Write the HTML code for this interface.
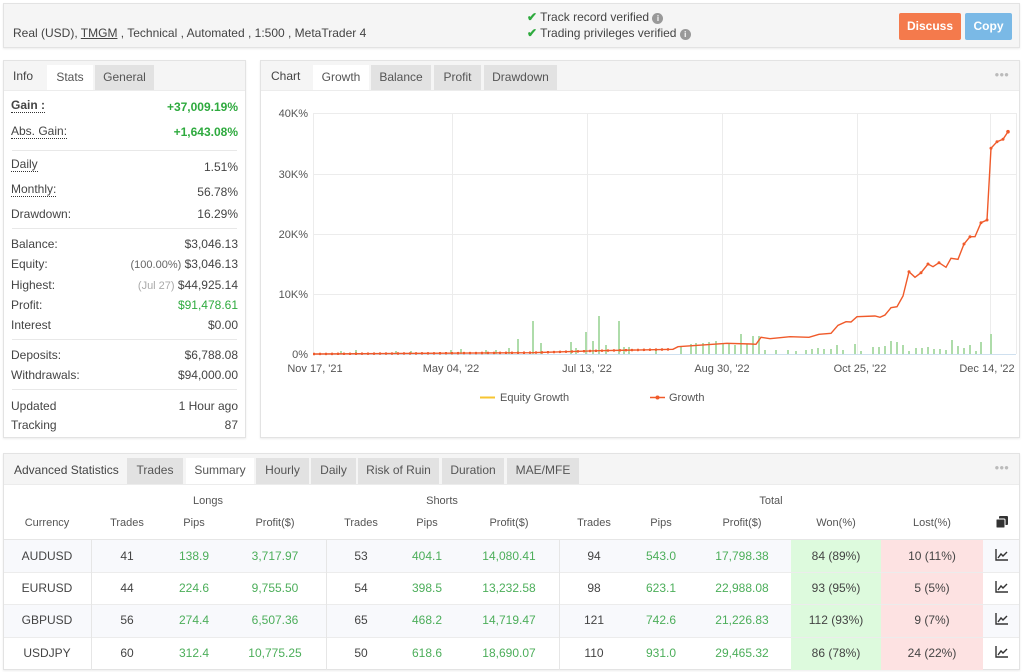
<!DOCTYPE html>
<html><head><meta charset="utf-8">
<style>
*{box-sizing:border-box;margin:0;padding:0}
body{width:1024px;height:672px;background:#fff;font-family:"Liberation Sans",sans-serif;font-size:12px;color:#444;position:relative;overflow:hidden}
.a{position:absolute;white-space:nowrap}
.box{position:absolute;border:1px solid #e3e3e3;background:#fff;box-shadow:0 1px 2px rgba(0,0,0,.08)}
.tabbar{position:absolute;left:0;right:0;top:0;background:#f5f5f5;border-bottom:1px solid #ececec}
.tab{position:absolute;top:4px;bottom:0;background:#e2e2e2;text-align:center;line-height:24px;color:#555}
.tab.on{background:#fff}
.g{color:#2eaa3e}
.lg{color:#4cae5a}
.u{border-bottom:1px dotted #333}
.sep{position:absolute;left:8px;right:8px;height:1px;background:#e8e8e8}
.dots{position:absolute;color:#bbb;font-size:8px;letter-spacing:0}
.c{position:absolute;transform:translateX(-50%);white-space:nowrap}
</style></head><body>

<div class="box" style="left:3px;top:3px;width:1017px;height:45px;background:#f5f5f5">
 <div class="a" style="left:9px;top:22px">Real (USD), <span style="text-decoration:underline">TMGM</span> , Technical , Automated , 1:500 , MetaTrader 4</div>
 <div class="a" style="left:523px;top:6px"><span style="color:#2eaa3e;font-weight:bold">&#10004;</span> Track record verified <span style="display:inline-block;width:11px;height:11px;border-radius:50%;background:#999;color:#fff;font-size:8px;text-align:center;line-height:11px;font-weight:bold">i</span></div>
 <div class="a" style="left:523px;top:22px"><span style="color:#2eaa3e;font-weight:bold">&#10004;</span> Trading privileges verified <span style="display:inline-block;width:11px;height:11px;border-radius:50%;background:#999;color:#fff;font-size:8px;text-align:center;line-height:11px;font-weight:bold">i</span></div>
 <div class="a" style="left:895px;top:9px;width:62px;height:27px;background:#f47a4c;color:#fff;text-align:center;line-height:27px;font-weight:bold;border-radius:2px">Discuss</div>
 <div class="a" style="left:961px;top:9px;width:47px;height:27px;background:#7ab9e6;color:#fff;text-align:center;line-height:27px;font-weight:bold;border-radius:2px">Copy</div>
</div>

<div class="box" style="left:3px;top:60px;width:243px;height:378px">
 <div class="tabbar" style="height:30px">
  <div class="a" style="left:9px;top:8px;color:#444">Info</div>
  <div class="tab on" style="left:43px;width:46px">Stats</div>
  <div class="tab" style="left:91px;width:59px">General</div>
 </div>
 <div class="a" style="left:7px;top:37px;font-weight:bold"><span class="u">Gain :</span></div>
 <div class="a g" style="right:7px;top:39px;font-weight:bold">+37,009.19%</div>
 <div class="a" style="left:7px;top:63px"><span class="u">Abs. Gain:</span></div>
 <div class="a g" style="right:7px;top:64px;font-weight:bold">+1,643.08%</div>
 <div class="sep" style="top:89px"></div>
 <div class="a" style="left:7px;top:96px"><span class="u">Daily</span></div><div class="a" style="right:7px;top:99px">1.51%</div>
 <div class="a" style="left:7px;top:121px"><span class="u">Monthly:</span></div><div class="a" style="right:7px;top:124px">56.78%</div>
 <div class="a" style="left:7px;top:146px">Drawdown:</div><div class="a" style="right:7px;top:146px">16.29%</div>
 <div class="sep" style="top:167px"></div>
 <div class="a" style="left:7px;top:176px">Balance:</div><div class="a" style="right:7px;top:176px">$3,046.13</div>
 <div class="a" style="left:7px;top:196px">Equity:</div><div class="a" style="right:7px;top:196px"><span style="font-size:11px;color:#666">(100.00%)</span> $3,046.13</div>
 <div class="a" style="left:7px;top:217px">Highest:</div><div class="a" style="right:7px;top:217px"><span style="font-size:11px;color:#aaa">(Jul 27)</span> $44,925.14</div>
 <div class="a" style="left:7px;top:237px">Profit:</div><div class="a g" style="right:7px;top:237px">$91,478.61</div>
 <div class="a" style="left:7px;top:257px">Interest</div><div class="a" style="right:7px;top:257px">$0.00</div>
 <div class="sep" style="top:278px"></div>
 <div class="a" style="left:7px;top:287px">Deposits:</div><div class="a" style="right:7px;top:287px">$6,788.08</div>
 <div class="a" style="left:7px;top:307px">Withdrawals:</div><div class="a" style="right:7px;top:307px">$94,000.00</div>
 <div class="sep" style="top:328px"></div>
 <div class="a" style="left:7px;top:338px">Updated</div><div class="a" style="right:7px;top:338px">1 Hour ago</div>
 <div class="a" style="left:7px;top:357px">Tracking</div><div class="a" style="right:7px;top:357px">87</div>
</div>

<div class="box" style="left:260px;top:60px;width:760px;height:378px">
 <div class="tabbar" style="height:30px">
  <div class="a" style="left:10px;top:8px">Chart</div>
  <div class="tab on" style="left:52px;width:56px">Growth</div>
  <div class="tab" style="left:110px;width:60px">Balance</div>
  <div class="tab" style="left:173px;width:47px">Profit</div>
  <div class="tab" style="left:223px;width:73px">Drawdown</div>
  <div class="dots" style="right:10px;top:9px">&#9679;&#9679;&#9679;</div>
 </div>
</div>
<svg class="a" style="left:0;top:0" width="1024" height="440" viewBox="0 0 1024 440">
 <g stroke="#ececec" stroke-width="1">
  <line x1="313" y1="113.5" x2="1016" y2="113.5"/><line x1="313" y1="174.5" x2="1016" y2="174.5"/>
  <line x1="313" y1="234.5" x2="1016" y2="234.5"/><line x1="313" y1="294.5" x2="1016" y2="294.5"/>
  <line x1="313.5" y1="113" x2="313.5" y2="354"/><line x1="452.5" y1="113" x2="452.5" y2="354"/>
  <line x1="587.5" y1="113" x2="587.5" y2="354"/><line x1="722.5" y1="113" x2="722.5" y2="354"/>
  <line x1="857.5" y1="113" x2="857.5" y2="354"/><line x1="990.5" y1="113" x2="990.5" y2="354"/>
  <line x1="1016.5" y1="113" x2="1016.5" y2="354"/>
 </g>
 <line x1="313" y1="354.5" x2="1016" y2="354.5" stroke="#cfe0ef"/>
 <g fill="#aedcaa">
  <rect x="532" y="321" width="2" height="33"/><rect x="540" y="343" width="2" height="11"/>
  <rect x="517" y="339" width="2" height="15"/><rect x="508" y="348" width="2" height="6"/>
  <rect x="495" y="350" width="2" height="4"/><rect x="485" y="350" width="2" height="4"/>
  <rect x="460" y="349" width="2" height="5"/><rect x="450" y="350" width="2" height="4"/>
  <rect x="410" y="351" width="2" height="3"/><rect x="395" y="351" width="2" height="3"/>
  <rect x="570" y="342" width="2" height="12"/><rect x="575" y="348" width="2" height="6"/>
  <rect x="585" y="332" width="2" height="22"/><rect x="592" y="341" width="2" height="13"/>
  <rect x="598" y="316" width="2" height="38"/><rect x="605" y="345" width="2" height="9"/>
  <rect x="618" y="321" width="2" height="33"/><rect x="623" y="347" width="2" height="7"/>
  <rect x="628" y="347" width="2" height="7"/><rect x="655" y="349" width="2" height="5"/>
  <rect x="680" y="346" width="2" height="8"/><rect x="690" y="344" width="2" height="10"/>
  <rect x="695" y="343" width="2" height="11"/><rect x="702" y="343" width="2" height="11"/>
  <rect x="708" y="342" width="2" height="12"/><rect x="715" y="341" width="2" height="13"/>
  <rect x="722" y="344" width="2" height="10"/><rect x="728" y="343" width="2" height="11"/>
  <rect x="734" y="345" width="2" height="9"/><rect x="740" y="334" width="2" height="20"/>
  <rect x="746" y="344" width="2" height="10"/><rect x="752" y="336" width="2" height="18"/>
  <rect x="758" y="336" width="2" height="18"/><rect x="764" y="350" width="2" height="4"/>
  <rect x="775" y="350" width="2" height="4"/><rect x="787" y="350" width="2" height="4"/>
  <rect x="795" y="351" width="2" height="3"/><rect x="805" y="350" width="2" height="4"/>
  <rect x="811" y="349" width="2" height="5"/><rect x="817" y="348" width="2" height="6"/>
  <rect x="823" y="349" width="2" height="5"/><rect x="830" y="349" width="2" height="5"/>
  <rect x="836" y="345" width="2" height="9"/><rect x="842" y="350" width="2" height="4"/>
  <rect x="854" y="344" width="2" height="10"/><rect x="860" y="351" width="2" height="3"/>
  <rect x="872" y="347" width="2" height="7"/><rect x="878" y="347" width="2" height="7"/>
  <rect x="884" y="346" width="2" height="8"/><rect x="890" y="341" width="2" height="13"/>
  <rect x="896" y="342" width="2" height="12"/><rect x="902" y="345" width="2" height="9"/>
  <rect x="908" y="351" width="2" height="3"/><rect x="915" y="348" width="2" height="6"/>
  <rect x="921" y="348" width="2" height="6"/><rect x="927" y="347" width="2" height="7"/>
  <rect x="933" y="349" width="2" height="5"/><rect x="939" y="349" width="2" height="5"/>
  <rect x="945" y="350" width="2" height="4"/><rect x="951" y="340" width="2" height="14"/>
  <rect x="957" y="346" width="2" height="8"/><rect x="963" y="348" width="2" height="6"/>
  <rect x="969" y="345" width="2" height="9"/><rect x="975" y="351" width="2" height="3"/>
  <rect x="980" y="342" width="2" height="12"/><rect x="990" y="334" width="2" height="20"/>
  <rect x="355" y="350" width="2" height="4"/><rect x="340" y="351" width="2" height="3"/>
 </g>
 <polyline fill="none" stroke="#f05a2a" stroke-width="1.4" points="313,354 532,352.7 600,350.7 673,349.3 678,346.7 727,343.3 751,344 756,344.3 761,337.3 770,338.7 790,336.7 809,337.3 819,334.3 831,333.3 838,325.3 846,321.7 851,322 857,316.7 875,316 880,317.3 885,315 891,307.7 897,306.7 903,296 909,271.7 915,277.3 921,272.7 928,264 933,266.7 939,262.7 946,267.3 951,258.3 958,259.3 964,244 970,236.7 975,236.7 981,222.7 987,220 991,148.3 997,141.7 1003,139.3 1008,131.7"/>
 <g fill="#f05a2a">
  <circle cx="1008" cy="131.7" r="1.8"/><circle cx="991" cy="148.3" r="1.5"/><circle cx="997" cy="141.7" r="1.5"/><circle cx="1003" cy="139.3" r="1.5"/>
  <circle cx="981" cy="222.7" r="1.5"/><circle cx="987" cy="220" r="1.5"/><circle cx="964" cy="244" r="1.5"/><circle cx="970" cy="236.7" r="1.5"/>
  <circle cx="909" cy="271.7" r="1.5"/><circle cx="921" cy="272.7" r="1.5"/><circle cx="928" cy="264" r="1.5"/><circle cx="939" cy="262.7" r="1.5"/>
 </g>
 <polyline fill="none" stroke="#f05a2a" stroke-width="2.4" stroke-dasharray="2 4" points="313,354 532,352.7 600,350.7 673,349.3"/>
 <g font-family="Liberation Sans" font-size="11" fill="#555">
  <text x="308" y="117" text-anchor="end">40K%</text><text x="308" y="178" text-anchor="end">30K%</text>
  <text x="308" y="238" text-anchor="end">20K%</text><text x="308" y="298" text-anchor="end">10K%</text>
  <text x="308" y="358" text-anchor="end">0%</text>
  <text x="315" y="372" text-anchor="middle">Nov 17, '21</text><text x="451" y="372" text-anchor="middle">May 04, '22</text>
  <text x="587" y="372" text-anchor="middle">Jul 13, '22</text><text x="722" y="372" text-anchor="middle">Aug 30, '22</text>
  <text x="860" y="372" text-anchor="middle">Oct 25, '22</text><text x="987" y="372" text-anchor="middle">Dec 14, '22</text>
  <text x="500" y="401">Equity Growth</text><text x="669" y="401">Growth</text>
 </g>
 <line x1="480" y1="397.5" x2="495" y2="397.5" stroke="#f7c531" stroke-width="2"/>
 <line x1="650" y1="397.5" x2="665" y2="397.5" stroke="#f05a2a" stroke-width="1.5"/><circle cx="657.5" cy="397.5" r="2" fill="#f05a2a"/>
</svg>

<div class="box" style="left:3px;top:453px;width:1017px;height:217px">
 <div class="tabbar" style="height:31px">
  <div class="a" style="left:10px;top:9px">Advanced Statistics</div>
  <div class="tab" style="left:123px;width:56px;line-height:25px">Trades</div>
  <div class="tab on" style="left:182px;width:68px;line-height:25px">Summary</div>
  <div class="tab" style="left:252px;width:53px;line-height:25px">Hourly</div>
  <div class="tab" style="left:307px;width:45px;line-height:25px">Daily</div>
  <div class="tab" style="left:354px;width:81px;line-height:25px">Risk of Ruin</div>
  <div class="tab" style="left:438px;width:62px;line-height:25px">Duration</div>
  <div class="tab" style="left:503px;width:72px;line-height:25px">MAE/MFE</div>
  <div class="dots" style="right:10px;top:9px">&#9679;&#9679;&#9679;</div>
 </div>
</div>
<div class="a" style="left:4px;top:540px;width:1015px;height:32px;background:#f8f9fc"></div>
<div class="a" style="left:4px;top:604px;width:1015px;height:33px;background:#f8f9fc"></div>
<div class="a" style="left:791px;top:540px;width:90px;height:130px;background:#ddfadd"></div>
<div class="a" style="left:881px;top:540px;width:102px;height:130px;background:#fde2e2"></div>
<div class="a" style="left:4px;top:539px;width:1015px;height:1px;background:#e6e6e6"></div>
<div class="a" style="left:4px;top:572px;width:1015px;height:1px;background:#ececec"></div>
<div class="a" style="left:4px;top:604px;width:1015px;height:1px;background:#ececec"></div>
<div class="a" style="left:4px;top:637px;width:1015px;height:1px;background:#ececec"></div>
<div class="a" style="left:91px;top:540px;width:1px;height:130px;background:#e6e6e6"></div>
<div class="a" style="left:326px;top:540px;width:1px;height:130px;background:#e6e6e6"></div>
<div class="a" style="left:559px;top:540px;width:1px;height:130px;background:#e6e6e6"></div>

<div style="font-size:11px;color:#555">
<div class="c" style="left:208px;top:495px">Longs</div>
<div class="c" style="left:442px;top:495px">Shorts</div>
<div class="c" style="left:771px;top:495px">Total</div>
<div class="c" style="left:47px;top:517px">Currency</div>
<div class="c" style="left:127px;top:517px">Trades</div>
<div class="c" style="left:194px;top:517px">Pips</div>
<div class="c" style="left:275px;top:517px">Profit($)</div>
<div class="c" style="left:361px;top:517px">Trades</div>
<div class="c" style="left:427px;top:517px">Pips</div>
<div class="c" style="left:509px;top:517px">Profit($)</div>
<div class="c" style="left:594px;top:517px">Trades</div>
<div class="c" style="left:661px;top:517px">Pips</div>
<div class="c" style="left:742px;top:517px">Profit($)</div>
<div class="c" style="left:836px;top:517px">Won(%)</div>
<div class="c" style="left:932px;top:517px">Lost(%)</div>
</div>
<svg class="a" style="left:995px;top:515px" width="14" height="14" viewBox="0 0 14 14"><rect x="4" y="1" width="9" height="9" rx="1" fill="#333"/><rect x="1" y="4" width="9" height="9" rx="1" fill="#333" stroke="#fff" stroke-width="1"/></svg>

<div style="font-size:12px">
<div class="c" style="left:47px;top:549px">AUDUSD</div><div class="c" style="left:127px;top:549px">41</div>
<div class="c lg" style="left:194px;top:549px">138.9</div><div class="c lg" style="left:275px;top:549px">3,717.97</div>
<div class="c" style="left:361px;top:549px">53</div><div class="c lg" style="left:427px;top:549px">404.1</div>
<div class="c lg" style="left:509px;top:549px">14,080.41</div><div class="c" style="left:594px;top:549px">94</div>
<div class="c lg" style="left:661px;top:549px">543.0</div><div class="c lg" style="left:742px;top:549px">17,798.38</div>
<div class="c" style="left:836px;top:549px">84 (89%)</div><div class="c" style="left:932px;top:549px">10 (11%)</div>
<div class="c" style="left:47px;top:581px">EURUSD</div><div class="c" style="left:127px;top:581px">44</div>
<div class="c lg" style="left:194px;top:581px">224.6</div><div class="c lg" style="left:275px;top:581px">9,755.50</div>
<div class="c" style="left:361px;top:581px">54</div><div class="c lg" style="left:427px;top:581px">398.5</div>
<div class="c lg" style="left:509px;top:581px">13,232.58</div><div class="c" style="left:594px;top:581px">98</div>
<div class="c lg" style="left:661px;top:581px">623.1</div><div class="c lg" style="left:742px;top:581px">22,988.08</div>
<div class="c" style="left:836px;top:581px">93 (95%)</div><div class="c" style="left:932px;top:581px">5 (5%)</div>
<div class="c" style="left:47px;top:613px">GBPUSD</div><div class="c" style="left:127px;top:613px">56</div>
<div class="c lg" style="left:194px;top:613px">274.4</div><div class="c lg" style="left:275px;top:613px">6,507.36</div>
<div class="c" style="left:361px;top:613px">65</div><div class="c lg" style="left:427px;top:613px">468.2</div>
<div class="c lg" style="left:509px;top:613px">14,719.47</div><div class="c" style="left:594px;top:613px">121</div>
<div class="c lg" style="left:661px;top:613px">742.6</div><div class="c lg" style="left:742px;top:613px">21,226.83</div>
<div class="c" style="left:836px;top:613px">112 (93%)</div><div class="c" style="left:932px;top:613px">9 (7%)</div>
<div class="c" style="left:47px;top:646px">USDJPY</div><div class="c" style="left:127px;top:646px">60</div>
<div class="c lg" style="left:194px;top:646px">312.4</div><div class="c lg" style="left:275px;top:646px">10,775.25</div>
<div class="c" style="left:361px;top:646px">50</div><div class="c lg" style="left:427px;top:646px">618.6</div>
<div class="c lg" style="left:509px;top:646px">18,690.07</div><div class="c" style="left:594px;top:646px">110</div>
<div class="c lg" style="left:661px;top:646px">931.0</div><div class="c lg" style="left:742px;top:646px">29,465.32</div>
<div class="c" style="left:836px;top:646px">86 (78%)</div><div class="c" style="left:932px;top:646px">24 (22%)</div>
</div>

<svg class="a" style="left:0;top:0" width="1024" height="672" viewBox="0 0 1024 672">
 <g fill="none" stroke="#333" stroke-width="1.4">
  <path d="M996 549v11h12M998 558l3-4 2 2 4-4"/>
  <path d="M996 581v11h12M998 590l3-4 2 2 4-4"/>
  <path d="M996 613v11h12M998 622l3-4 2 2 4-4"/>
  <path d="M996 646v11h12M998 655l3-4 2 2 4-4"/>
 </g>
</svg>
</body></html>
